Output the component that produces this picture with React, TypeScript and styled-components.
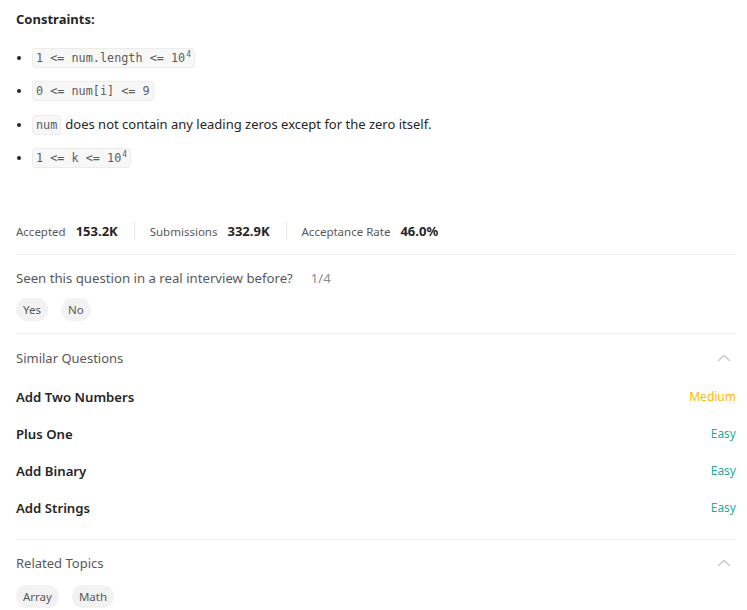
import React from "react";
import styled, { createGlobalStyle } from "styled-components";

const Global = createGlobalStyle`
  html, body { margin: 0; padding: 0; background: #ffffff; }
  body { font-family: "Noto Sans", "Open Sans", sans-serif; color: #262626; }
`;

const Page = styled.div`
  width: 747px;
  box-sizing: border-box;
  padding: 0 11px 0 16px;
`;

const Title = styled.div`
  font-size: 13px;
  font-weight: 700;
  color: #262626;
  padding-top: 10px;
  line-height: 18px;
`;

const List = styled.ul`
  margin: 19px 0 0 0;
  padding: 0 0 0 16px;
  display: flex;
  flex-direction: column;
  gap: 13.3px;
`;

const Item = styled.li`
  font-size: 13px;
  line-height: 20px;
  height: 20px;
  color: #262626;
  &::marker { font-size: 12px; }
`;

const Code = styled.code`
  font-family: "DejaVu Sans Mono", "Liberation Mono", monospace;
  font-size: 11.8px;
  line-height: 1;
  color: #5c5c5c;
  background: #f7f7f8;
  border: 1px solid #ececec;
  border-radius: 4px;
  padding: 2px 3px;
  margin-right: 4px;
  sup { font-size: 8px; line-height: 0; vertical-align: 5px; margin-left: 1px; }
`;

const Stats = styled.div`
  margin-top: 54px;
  display: flex;
  align-items: center;
  height: 20px;
  padding-bottom: 13px;
  border-bottom: 1px solid #eeeeee;
`;

const Stat = styled.div<{ $first?: boolean }>`
  display: flex;
  align-items: baseline;
  gap: 10px;
  padding: 0 16px 0 15px;
  ${(p) => (p.$first ? "padding-left: 0;" : "border-left: 1px solid #e6e6e6;")}
`;

const StatLabel = styled.span`
  font-size: 11.5px;
  color: #595959;
`;

const StatValue = styled.span`
  font-size: 13px;
  font-weight: 700;
  color: #262626;
`;

const Section = styled.div<{ $border?: boolean; $top?: number }>`
  padding: ${(p) => p.$top ?? 13}px 0 12px;
  ${(p) => (p.$border ? "border-bottom: 1px solid #eeeeee;" : "")}
`;

const Question = styled.div`
  font-size: 13.2px;
  color: #595959;
  display: flex;
  gap: 18px;
  line-height: 20px;
`;

const Count = styled.span`
  color: #8c8c8c;
`;

const Chips = styled.div<{ $top?: number }>`
  display: flex;
  gap: 13px;
  margin-top: ${(p) => p.$top ?? 10}px;
`;

const Chip = styled.span`
  font-size: 11.5px;
  color: #595959;
  background: #f2f2f2;
  border-radius: 12px;
  height: 23px;
  line-height: 23px;
  padding: 0 7px;
`;

const Header = styled.div`
  display: flex;
  justify-content: space-between;
  align-items: center;
  font-size: 13px;
  color: #595959;
  line-height: 20px;
  padding-right: 5px;
`;

const Rows = styled.div`
  display: flex;
  flex-direction: column;
  gap: 17px;
  margin-top: 19px;
  padding-bottom: 9px;
`;

const Row = styled.div`
  display: flex;
  justify-content: space-between;
  align-items: center;
  line-height: 20px;
`;

const RowTitle = styled.span`
  font-size: 13.2px;
  font-weight: 600;
  color: #262626;
`;

const Difficulty = styled.span<{ $level: "Easy" | "Medium" }>`
  font-size: 12px;
  color: ${(p) => (p.$level === "Easy" ? "#1fad9a" : "#ffb800")};
`;

const Chevron = () => (
  <svg width="14" height="8" viewBox="0 0 14 8" fill="none">
    <path d="M1 7 L7 1.5 L13 7" stroke="#c8c8c8" strokeWidth="1.3" />
  </svg>
);

const similar: { t: string; d: "Easy" | "Medium" }[] = [
  { t: "Add Two Numbers", d: "Medium" },
  { t: "Plus One", d: "Easy" },
  { t: "Add Binary", d: "Easy" },
  { t: "Add Strings", d: "Easy" },
];

export default function App() {
  return (
    <Page>
      <Global />
      <Title>Constraints:</Title>
      <List>
        <Item>
          <Code>
            1 &lt;= num.length &lt;= 10<sup>4</sup>
          </Code>
        </Item>
        <Item>
          <Code>0 &lt;= num[i] &lt;= 9</Code>
        </Item>
        <Item>
          <Code>num</Code>does not contain any leading zeros except for the zero itself.
        </Item>
        <Item>
          <Code>
            1 &lt;= k &lt;= 10<sup>4</sup>
          </Code>
        </Item>
      </List>
      <Stats>
        <Stat $first>
          <StatLabel>Accepted</StatLabel>
          <StatValue>153.2K</StatValue>
        </Stat>
        <Stat>
          <StatLabel>Submissions</StatLabel>
          <StatValue>332.9K</StatValue>
        </Stat>
        <Stat>
          <StatLabel>Acceptance Rate</StatLabel>
          <StatValue>46.0%</StatValue>
        </Stat>
      </Stats>
      <Section $border>
        <Question>
          <span>Seen this question in a real interview before?</span>
          <Count>1/4</Count>
        </Question>
        <Chips>
          <Chip>Yes</Chip>
          <Chip>No</Chip>
        </Chips>
      </Section>
      <Section $border $top={14}>
        <Header>
          <span>Similar Questions</span>
          <Chevron />
        </Header>
        <Rows>
          {similar.map((s) => (
            <Row key={s.t}>
              <RowTitle>{s.t}</RowTitle>
              <Difficulty $level={s.d}>{s.d}</Difficulty>
            </Row>
          ))}
        </Rows>
      </Section>
      <Section $top={13}>
        <Header>
          <span>Related Topics</span>
          <Chevron />
        </Header>
        <Chips $top={12}>
          <Chip>Array</Chip>
          <Chip>Math</Chip>
        </Chips>
      </Section>
    </Page>
  );
}
